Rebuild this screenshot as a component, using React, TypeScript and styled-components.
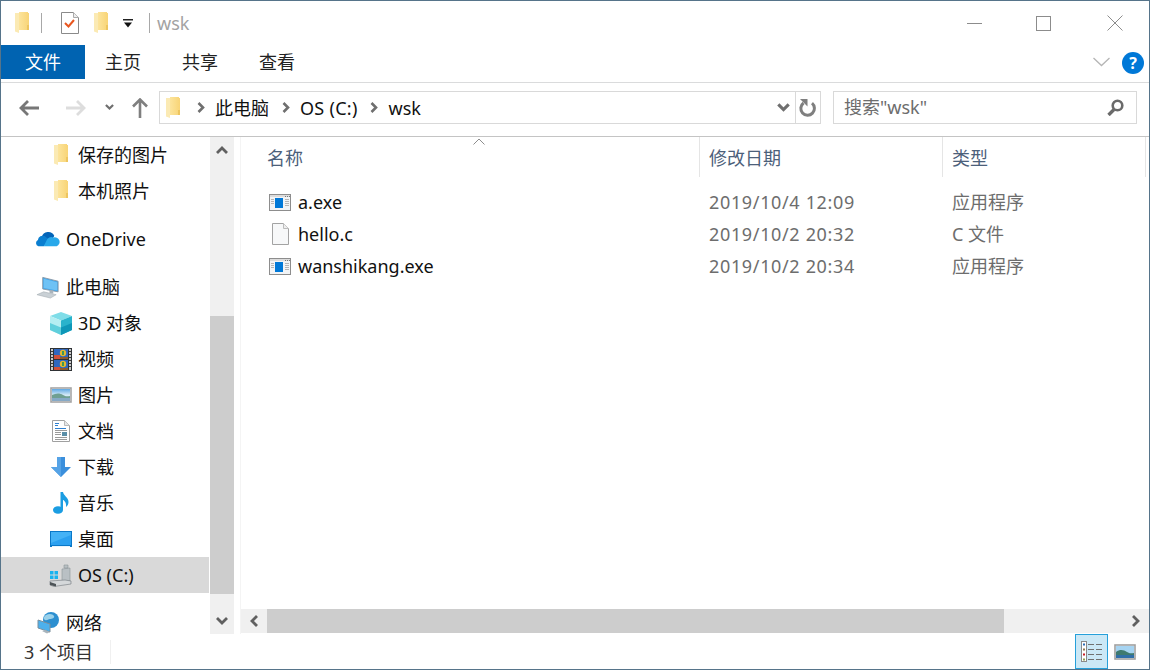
import React from 'react';
import styled, { createGlobalStyle } from 'styled-components';

const GlobalStyle = createGlobalStyle`
  html, body { margin: 0; padding: 0; background: #fff; }
  * { box-sizing: border-box; }
`;

const FONT = `"Noto Sans", "Noto Sans CJK SC", sans-serif`;

const Window = styled.div`
  width: 1150px;
  height: 670px;
  display: flex;
  flex-direction: column;
  border: 1px solid #56748a;
  background: #fff;
  font-family: ${FONT};
  font-size: 18px;
  line-height: 24px;
  color: #111;
  overflow: hidden;
`;

const TitleBar = styled.div`
  height: 44px;
  flex: none;
  display: flex;
  align-items: center;
  padding-left: 14px;
`;

const QuickIcon = styled.div<{ $ml?: number }>`
  display: flex;
  margin-left: ${p => p.$ml ?? 0}px;
`;

const TitleSep = styled.div<{ $ml: number }>`
  width: 1px;
  height: 20px;
  margin-left: ${p => p.$ml}px;
  background: #a8a8a8;
`;

const TitleText = styled.div`
  margin-left: 7px;
  color: #a3a3a3;
`;

const WindowButtons = styled.div`
  margin-left: auto;
  display: flex;
  align-items: center;
  padding-right: 26px;
`;

const WindowButton = styled.div<{ $ml?: number }>`
  display: flex;
  margin-left: ${p => p.$ml ?? 0}px;
`;

const TabBar = styled.div`
  height: 38px;
  flex: none;
  display: flex;
  align-items: flex-start;
  border-bottom: 1px solid #dadbdc;
`;

const FileTab = styled.div`
  width: 84px;
  height: 34px;
  padding-left: 24px;
  background: #0063b1;
  color: #fff;
  display: flex;
  align-items: center;
`;

const Tab = styled.div`
  width: 77px;
  height: 34px;
  padding-left: 20px;
  display: flex;
  align-items: center;
  color: #222;
`;

const RibbonRight = styled.div`
  margin-left: auto;
  height: 34px;
  padding-right: 5px;
  display: flex;
  align-items: center;
  gap: 12px;
`;

const HelpIcon = styled.div`
  width: 22px;
  height: 22px;
  border-radius: 50%;
  background: #0078d7;
  color: #fff;
  font-size: 16px;
  font-weight: 700;
  line-height: 22px;
  text-align: center;
  margin-top: 2px;
`;

const AddressRow = styled.div`
  height: 54px;
  flex: none;
  display: flex;
  align-items: flex-start;
  padding-top: 8px;
  border-bottom: 1px solid #c4c4c4;
`;

const NavButtons = styled.div`
  width: 158px;
  height: 33px;
  flex: none;
  display: flex;
  align-items: center;
  padding-left: 18px;
`;

const NavBtn = styled.div<{ $ml?: number }>`
  display: flex;
  margin-left: ${p => p.$ml ?? 0}px;
`;

const AddressBox = styled.div`
  width: 662px;
  height: 33px;
  flex: none;
  display: flex;
  align-items: center;
  border: 1px solid #d9d9d9;
  padding-left: 6px;
`;

const Crumb = styled.span<{ $wide?: boolean; $ml?: number }>`
  margin: 0 ${p => (p.$wide ? 12 : 13)}px 0 ${p => p.$ml ?? 10}px;
  letter-spacing: ${p => (p.$wide ? 0.28 : 0)}px;
  color: #111;
  white-space: nowrap;
`;

const CrumbChevron = styled.div<{ $ml?: number }>`
  display: flex;
  margin-left: ${p => p.$ml ?? 0}px;
`;

const AddressEnd = styled.div`
  margin-left: auto;
  display: flex;
  align-items: center;
  height: 100%;
`;

const DropCell = styled.div`
  width: 21px;
  display: flex;
  justify-content: center;
  padding-right: 3px;
`;

const RefreshCell = styled.div`
  width: 25px;
  height: 100%;
  display: flex;
  align-items: center;
  justify-content: center;
  border-left: 1px solid #d9d9d9;
`;

const SearchBox = styled.div`
  width: 304px;
  height: 33px;
  flex: none;
  margin-left: 12px;
  display: flex;
  align-items: center;
  justify-content: space-between;
  border: 1px solid #d9d9d9;
  padding: 0 12px 0 10px;
  color: #6d6d6d;
`;

const SearchHint = styled.span`
  padding-bottom: 1px;
`;

const Main = styled.div`
  flex: 1;
  min-height: 0;
  display: flex;
`;

const NavPane = styled.div`
  width: 208px;
  flex: none;
`;

const NavItem = styled.div<{ $top?: boolean; $gap?: boolean; $selected?: boolean }>`
  height: 36px;
  display: flex;
  align-items: center;
  margin-top: ${p => (p.$gap ? 12 : 0)}px;
  padding-left: ${p => (p.$top ? 35 : 48)}px;
  background: ${p => (p.$selected ? '#d9d9d9' : 'transparent')};
  gap: ${p => (p.$top ? 6 : 5)}px;
  white-space: nowrap;
`;

const NavIcon = styled.div`
  width: 24px;
  height: 24px;
  flex: none;
  display: flex;
  align-items: center;
  justify-content: center;
`;

const NavLabel = styled.span`
  padding-bottom: 1px;
`;

const VScroll = styled.div`
  width: 24px;
  margin-left: 1px;
  flex: none;
  display: flex;
  flex-direction: column;
  background: #f0f0f0;
`;

const ArrowCell = styled.div`
  height: 26px;
  flex: none;
  display: flex;
  align-items: center;
  justify-content: center;
`;

const VThumbSpace = styled.div`
  height: 153px;
  flex: none;
`;

const VThumb = styled.div`
  height: 278px;
  flex: none;
  background: #cdcdcd;
`;

const VRest = styled.div`
  flex: 1;
`;

const Splitter = styled.div`
  width: 7px;
  flex: none;
  background: #fff;
  border-right: 1px solid #f4f4f4;
`;

const Content = styled.div`
  flex: 1;
  min-width: 0;
  display: flex;
  flex-direction: column;
`;

const HeaderRow = styled.div`
  height: 40px;
  flex: none;
  display: grid;
  grid-template-columns: 459px 243px 203px;
  position: relative;
`;

const HeaderCell = styled.div<{ $pad: number }>`
  padding-left: ${p => p.$pad}px;
  padding-top: 9px;
  color: #4c607a;
  border-right: 1px solid #e5e5e5;
`;

const SortCaret = styled.div`
  position: absolute;
  left: 232px;
  top: 1px;
  display: flex;
`;

const FileList = styled.div`
  flex: 1;
  padding-top: 9px;
`;

const FileRow = styled.div`
  height: 32px;
  display: grid;
  grid-template-columns: 459px 243px 203px;
  align-items: center;
`;

const NameCell = styled.div`
  display: flex;
  align-items: center;
  padding-left: 26px;
  gap: 5px;
  color: #111;
`;

const FileIconBox = styled.div`
  width: 26px;
  height: 24px;
  display: flex;
  align-items: center;
  justify-content: center;
`;

const MetaCell = styled.div`
  padding-left: 9px;
  color: #6d6d6d;
`;

const DateCell = styled(MetaCell)`
  letter-spacing: 0.65px;
`;

const HScroll = styled.div`
  height: 24px;
  flex: none;
  margin-bottom: 1px;
  display: flex;
  background: #f0f0f0;
`;

const HArrow = styled.div`
  width: 26px;
  flex: none;
  display: flex;
  align-items: center;
  justify-content: center;
`;

const HThumb = styled.div`
  width: 737px;
  flex: none;
  background: #cdcdcd;
`;

const HRest = styled.div`
  flex: 1;
`;

const StatusBar = styled.div`
  height: 35px;
  flex: none;
  display: flex;
  align-items: center;
`;

const StatusText = styled.div`
  width: 110px;
  height: 24px;
  padding-left: 23px;
  margin-top: 1px;
  color: #333;
  border-right: 1px solid #f0f0f0;
`;

const ViewButtons = styled.div`
  margin-left: auto;
  height: 100%;
  display: flex;
  align-items: center;
  padding-right: 13px;
`;

const DetailsView = styled.div`
  width: 33px;
  height: 35px;
  background: #cbe8f6;
  border: 1px solid #26a0da;
  display: flex;
  align-items: center;
  justify-content: center;
`;

const LargeView = styled.div`
  margin-left: 6px;
  display: flex;
`;

const Folder = () => (
  <svg width="15" height="22" viewBox="0 0 15 22">
    <defs>
      <linearGradient id="fold" x1="0" x2="1" y1="0" y2="0">
        <stop offset="0" stopColor="#fce49c" />
        <stop offset="1" stopColor="#f8d476" />
      </linearGradient>
    </defs>
    <path d="M0 1h4v20l-4-1.500z" fill="#fbeab4" />
    <path d="M4 0h9v1h1v17H4z" fill="url(#fold)" />
    <path d="M12 13h2v5h-2z" fill="#edc55f" />
  </svg>
);

const DocCheck = () => (
  <svg width="18" height="22" viewBox="0 0 18 22">
    <path d="M.5.5h12l5 5v16H.5z" fill="#fff" stroke="#8a8a8a" />
    <path d="M12.500.5v5h5" fill="#eee" stroke="#aaa" />
    <path d="M4 11l3.500 3.500L13 8" fill="none" stroke="#e8561f" strokeWidth="2" />
  </svg>
);

const QuickDrop = () => (
  <svg width="10" height="9" viewBox="0 0 10 9">
    <path d="M0 0h10v1.500H0z" fill="#222" />
    <path d="M1 3.500h8L5 8.500z" fill="#111" />
  </svg>
);

const MinIcon = () => (
  <svg width="15" height="15" viewBox="0 0 15 15">
    <path d="M0 7.500h15" stroke="#8c8c8c" />
  </svg>
);

const MaxIcon = () => (
  <svg width="15" height="15" viewBox="0 0 15 15">
    <rect x=".5" y=".5" width="14" height="14" fill="none" stroke="#8c8c8c" />
  </svg>
);

const CloseIcon = () => (
  <svg width="16" height="16" viewBox="0 0 16 16">
    <path d="M.5.5l15 15M15.500.5l-15 15" stroke="#8c8c8c" fill="none" />
  </svg>
);

const RibbonChevron = () => (
  <svg width="17" height="10" viewBox="0 0 17 10">
    <path d="M.5 1l8 7.500 8-7.500" stroke="#b5b5b5" strokeWidth="1.300" fill="none" />
  </svg>
);

const BackArrow = ({ color }: { color: string }) => (
  <svg width="20" height="16" viewBox="0 0 20 16">
    <path d="M9 1L2 8l7 7M2 8h18" stroke={color} strokeWidth="2.800" fill="none" />
  </svg>
);

const ForwardArrow = ({ color }: { color: string }) => (
  <svg width="20" height="16" viewBox="0 0 20 16">
    <path d="M11 1l7 7-7 7M18 8H0" stroke={color} strokeWidth="2.800" fill="none" />
  </svg>
);

const UpArrow = () => (
  <svg width="16" height="20" viewBox="0 0 16 20">
    <path d="M1 8.500L8 1.500l7 7M8 2v18" stroke="#7f7f7f" strokeWidth="2.600" fill="none" />
  </svg>
);

const SmallDown = ({ color = '#6f6f6f', w = 9 }: { color?: string; w?: number }) => (
  <svg width={w} height={w * 0.7} viewBox="0 0 10 7">
    <path d="M1 1l4 4 4-4" stroke={color} strokeWidth="2.400" fill="none" />
  </svg>
);

const CrumbArrow = () => (
  <svg width="8" height="11" viewBox="0 0 8 11">
    <path d="M1.500 1l4.500 4.500-4.500 4.500" stroke="#6f6f6f" strokeWidth="2.600" fill="none" />
  </svg>
);

const Refresh = () => (
  <svg width="18" height="18" viewBox="0 0 18 18">
    <path d="M13 4.200a6.800 6.800 0 1 1-8.500-.2" stroke="#7f7f7f" strokeWidth="3" fill="none" />
    <path d="M0 0h7.500v7.500z" fill="#7f7f7f" transform="translate(1 0)" />
  </svg>
);

const SearchGlass = () => (
  <svg width="17" height="17" viewBox="0 0 17 17">
    <circle cx="10.500" cy="6.500" r="4.800" fill="none" stroke="#6a6a6a" strokeWidth="2.600" />
    <path d="M7 10.500L1.500 16" stroke="#6a6a6a" strokeWidth="3.400" />
  </svg>
);

const ScrollUp = () => (
  <svg width="12" height="8" viewBox="0 0 12 8">
    <path d="M1 7l5-5 5 5" stroke="#606060" strokeWidth="2.800" fill="none" />
  </svg>
);

const ScrollDown = () => (
  <svg width="12" height="8" viewBox="0 0 12 8">
    <path d="M1 1l5 5 5-5" stroke="#606060" strokeWidth="2.800" fill="none" />
  </svg>
);

const ScrollLeft = () => (
  <svg width="8" height="12" viewBox="0 0 8 12">
    <path d="M7 1L2 6l5 5" stroke="#606060" strokeWidth="2.800" fill="none" />
  </svg>
);

const ScrollRight = () => (
  <svg width="8" height="12" viewBox="0 0 8 12">
    <path d="M1 1l5 5-5 5" stroke="#606060" strokeWidth="2.800" fill="none" />
  </svg>
);

const OneDriveIcon = () => (
  <svg width="25" height="16" viewBox="0 0 25 16">
    <path d="M6 6a7 7 0 0 1 13-1.500A5 5 0 0 1 14 8L9 11z" fill="#0364b8" />
    <path d="M2.500 15.500A3.500 3.500 0 0 1 2 9a5 5 0 0 1 7-4l5 4-6 6.500z" fill="#0a7ed0" />
    <path d="M8 15.500l3-6a5 5 0 0 1 7-3 4.500 4.500 0 0 1 3.500 9.000z" fill="#28a8ea" />
  </svg>
);

const PcIcon = () => (
  <svg width="25" height="23" viewBox="0 0 25 23">
    <path d="M7 1l16 4v11L7 13z" fill="#3ea6ee" stroke="#8a9aa8" />
    <path d="M8 2.500l14 3.500v8.500L8 12z" fill="#6ec2f5" />
    <path d="M14 14l4 1v3l-4-1z" fill="#aab4bc" />
    <path d="M1 19l7-3 13 3-6 3.500z" fill="#c9d0d5" stroke="#a5adb3" strokeWidth=".6" />
  </svg>
);

const CubeIcon = () => (
  <svg width="24" height="23" viewBox="0 0 24 23">
    <path d="M12 0l11 4-11 4.500L1 4z" fill="#7fdde8" />
    <path d="M1 4l11 4.500V23L1 18z" fill="#b5eef2" />
    <path d="M1 11l11 4.500V23L1 18z" fill="#60cfdc" />
    <path d="M23 4L12 8.500V23l11-5z" fill="#29b3cc" />
    <path d="M23 11l-11 4.500V23l11-5z" fill="#0e97b8" />
  </svg>
);

const VideoIcon = () => (
  <svg width="22" height="23" viewBox="0 0 22 23">
    <rect width="22" height="23" fill="#2f3235" />
    <path d="M1 1h2v21H1zM19 1h2v21h-2z" fill="#c9c9c9" />
    <path d="M1 3.500h2M1 6.500h2M1 9.500h2M1 12.500h2M1 15.500h2M1 18.500h2M19 3.500h2M19 6.500h2M19 9.500h2M19 12.500h2M19 15.500h2M19 18.500h2" stroke="#3b3b3b" />
    <rect x="4" y="1" width="14" height="10" fill="#2f67c0" />
    <rect x="4" y="12" width="14" height="10" fill="#2f67c0" />
    <rect x="4" y="7" width="6" height="4" fill="#d0503a" />
    <rect x="4" y="19" width="6" height="3" fill="#d0503a" />
    <circle cx="13" cy="5" r="3.200" fill="#e5b72e" />
    <path d="M12 3h2v4h-2z" fill="#3f9a55" />
    <circle cx="13" cy="16" r="3.200" fill="#e5b72e" />
    <path d="M12 14h2v4h-2z" fill="#3f9a55" />
    <path d="M10 9h8v2h-8zM10 20h8v2h-8z" fill="#8f5a2c" />
  </svg>
);

const PictureIcon = () => (
  <svg width="22" height="16" viewBox="0 0 22 16">
    <defs>
      <linearGradient id="sky" x1="0" x2="0" y1="0" y2="1">
        <stop offset="0" stopColor="#5fa8e4" />
        <stop offset=".5" stopColor="#d4e9f6" />
      </linearGradient>
    </defs>
    <rect x="1" y="1" width="20" height="14" fill="#fff" stroke="#a5a5a5" strokeWidth="1.600" />
    <rect x="2" y="2" width="18" height="12" fill="url(#sky)" />
    <path d="M2 8c4-2 8-2 11 0s5 1 7 1v5H2z" fill="#6f9f92" />
    <path d="M2 11h18v3H2z" fill="#86a9c6" />
  </svg>
);

const DocsIcon = () => (
  <svg width="18" height="22" viewBox="0 0 18 22">
    <path d="M.5.5h12l5 5v16H.5z" fill="#fff" stroke="#a0a0a0" />
    <path d="M12.500.5v5h5" fill="#e6e6e6" stroke="#bbb" />
    <path d="M3 3.500h4M3 5.500h3M3 8.500h11" stroke="#2f80d0" />
    <path d="M3 10.500h12M3 17.500h12M3 19.500h12M3 12.500h6M3 14.500h6" stroke="#9a9a9a" />
    <rect x="10" y="12" width="5" height="4" fill="#5b8fa8" />
  </svg>
);

const DownloadIcon = () => (
  <svg width="20" height="20" viewBox="0 0 20 20">
    <path d="M6 0h8v10h6L10 20 0 10h6z" fill="#3b8fdc" />
    <path d="M6 0h4v20L0 10h6z" fill="#56a3e6" />
  </svg>
);

const MusicIcon = () => (
  <svg width="16" height="22" viewBox="0 0 16 22">
    <ellipse cx="5" cy="18" rx="5" ry="3.800" fill="#1b9de2" />
    <path d="M7.500 0h2.500c.5 4 5.500 5 5.500 10 0 2-1 4-2.500 5 .6-3-1-6.500-3-7v10H7.500z" fill="#1b9de2" />
  </svg>
);

const DesktopIcon = () => (
  <svg width="22" height="16" viewBox="0 0 22 16">
    <rect width="22" height="16" fill="#0a78c8" />
    <rect x="1" y="1" width="20" height="13" fill="#2ba0f0" />
    <path d="M1 1h20v3L1 12z" fill="#44b2f6" />
    <path d="M2 15.500h18" stroke="#e8f4fc" />
  </svg>
);

const DriveIcon = () => (
  <svg width="24" height="23" viewBox="0 0 24 23">
    <path d="M1 7h3.500v3.500H1zM5.500 7H9v3.500H5.500zM1 11.500h3.500V15H1zM5.500 11.500H9V15H5.500z" fill="#19b3ef" />
    <path d="M15 1h4v3h-4zM13 5l8-1v13l-8 1z" fill="#b9c0c4" stroke="#8c9398" strokeWidth=".6" />
    <path d="M1 17l15-1 6 1v3L5 22.500 1 21z" fill="#d5d8da" stroke="#70777c" strokeWidth=".6" />
    <path d="M1 18l6 2v2.500L1 21z" fill="#4d5357" />
  </svg>
);

const NetworkIcon = () => (
  <svg width="23" height="22" viewBox="0 0 23 22">
    <circle cx="14" cy="8" r="8" fill="#2c8fd0" />
    <path d="M9 3c3-2 7-1 8 1s-2 3-4 3-3 2-5 1-1-4 1-5z" fill="#9ad1ea" />
    <path d="M1 8l12 4v8L1 16z" fill="#4db0ec" stroke="#7c8f9c" />
    <path d="M5 19l5 2.500 3-1.500-5-2z" fill="#a8b4bc" />
  </svg>
);

const ExeIcon = () => (
  <svg width="22" height="17" viewBox="0 0 22 17">
    <rect x=".5" y=".5" width="21" height="16" fill="#f2f4f6" stroke="#8d8d8d" />
    <path d="M1 1h20v2H1z" fill="#dcdcdc" />
    <path d="M16 2.500h1M18 2.500h1M20 2.500h1" stroke="#777" />
    <rect x="6" y="4" width="8" height="10" fill="#0078d7" />
    <path d="M2 5.500h3M2 7.500h3M2 9.500h3M16 5.500h4M16 7.500h4M16 9.500h4M16 11.500h4" stroke="#b5b5b5" />
  </svg>
);

const FileIcon = () => (
  <svg width="17" height="22" viewBox="0 0 17 22">
    <path d="M.5.500h11l5 5v16H.500z" fill="#f7f8f9" stroke="#a3a3a3" />
    <path d="M11.500.500v5h5" fill="#eee" stroke="#bcbcbc" />
  </svg>
);

const SortUp = () => (
  <svg width="12" height="7" viewBox="0 0 12 7">
    <path d="M.5 6.500L6 1l5.500 5.500" stroke="#8d8d8d" fill="none" />
  </svg>
);

const DetailsGlyph = () => (
  <svg width="21" height="21" viewBox="0 0 21 21">
    <rect x=".5" y=".5" width="5" height="20" fill="#fff" stroke="#8a8a8a" />
    <rect x="2" y="2.500" width="2" height="2" fill="#2a6fb8" />
    <rect x="2" y="7.500" width="2" height="2" fill="#8f7a50" />
    <rect x="2" y="12.500" width="2" height="2" fill="#c8202a" />
    <rect x="2" y="17.500" width="2" height="2" fill="#8fa050" />
    <path d="M7 3.500h6M15 3.500h6M7 8.500h6M15 8.500h6M7 13.500h6M15 13.500h6M7 18.500h6M15 18.500h6" stroke="#707070" />
  </svg>
);

const LargeGlyph = () => (
  <svg width="22" height="16" viewBox="0 0 22 16">
    <rect x="1" y="1" width="20" height="14" fill="#fff" stroke="#a0a0a0" strokeWidth="1.600" />
    <rect x="2" y="2" width="18" height="12" fill="#a6d4f2" />
    <path d="M2 8c4-3 8-2 11 0s5 1 7 1v5H2z" fill="#3e7a70" />
    <path d="M2 11h18v3H2z" fill="#2f6fa8" />
  </svg>
);

type NavEntry = {
  label: string;
  icon: React.ReactNode;
  top?: boolean;
  gap?: boolean;
  selected?: boolean;
};

const navItems: NavEntry[] = [
  { label: '保存的图片', icon: <Folder /> },
  { label: '本机照片', icon: <Folder /> },
  { label: 'OneDrive', icon: <OneDriveIcon />, top: true, gap: true },
  { label: '此电脑', icon: <PcIcon />, top: true, gap: true },
  { label: '3D 对象', icon: <CubeIcon /> },
  { label: '视频', icon: <VideoIcon /> },
  { label: '图片', icon: <PictureIcon /> },
  { label: '文档', icon: <DocsIcon /> },
  { label: '下载', icon: <DownloadIcon /> },
  { label: '音乐', icon: <MusicIcon /> },
  { label: '桌面', icon: <DesktopIcon /> },
  { label: 'OS (C:)', icon: <DriveIcon />, selected: true },
  { label: '网络', icon: <NetworkIcon />, top: true, gap: true },
];

const files = [
  { name: 'a.exe', date: '2019/10/4 12:09', type: '应用程序', icon: <ExeIcon /> },
  { name: 'hello.c', date: '2019/10/2 20:32', type: 'C 文件', icon: <FileIcon /> },
  { name: 'wanshikang.exe', date: '2019/10/2 20:34', type: '应用程序', icon: <ExeIcon /> },
];

export default function App(): JSX.Element {
  return (
    <Window>
      <GlobalStyle />
      <TitleBar>
        <QuickIcon><Folder /></QuickIcon>
        <TitleSep $ml={11} />
        <QuickIcon $ml={19}><DocCheck /></QuickIcon>
        <QuickIcon $ml={15}><Folder /></QuickIcon>
        <QuickIcon $ml={14}><QuickDrop /></QuickIcon>
        <TitleSep $ml={16} />
        <TitleText>wsk</TitleText>
        <WindowButtons>
          <WindowButton><MinIcon /></WindowButton>
          <WindowButton $ml={54}><MaxIcon /></WindowButton>
          <WindowButton $ml={56}><CloseIcon /></WindowButton>
        </WindowButtons>
      </TitleBar>
      <TabBar>
        <FileTab>文件</FileTab>
        <Tab>主页</Tab>
        <Tab>共享</Tab>
        <Tab>查看</Tab>
        <RibbonRight>
          <RibbonChevron />
          <HelpIcon>?</HelpIcon>
        </RibbonRight>
      </TabBar>
      <AddressRow>
        <NavButtons>
          <NavBtn><BackArrow color="#777" /></NavBtn>
          <NavBtn $ml={27}><ForwardArrow color="#ddd" /></NavBtn>
          <NavBtn $ml={19}><SmallDown /></NavBtn>
          <NavBtn $ml={18}><UpArrow /></NavBtn>
        </NavButtons>
        <AddressBox>
          <Folder />
          <CrumbChevron $ml={16}><CrumbArrow /></CrumbChevron>
          <Crumb>此电脑</Crumb>
          <CrumbArrow />
          <Crumb $wide>OS (C:)</Crumb>
          <CrumbArrow />
          <Crumb $ml={11}>wsk</Crumb>
          <AddressEnd>
            <DropCell><SmallDown w={13} /></DropCell>
            <RefreshCell><Refresh /></RefreshCell>
          </AddressEnd>
        </AddressBox>
        <SearchBox>
          <SearchHint>搜索"wsk"</SearchHint>
          <SearchGlass />
        </SearchBox>
      </AddressRow>
      <Main>
        <NavPane>
          {navItems.map(item => (
            <NavItem key={item.label} $top={item.top} $gap={item.gap} $selected={item.selected}>
              <NavIcon>{item.icon}</NavIcon>
              <NavLabel>{item.label}</NavLabel>
            </NavItem>
          ))}
        </NavPane>
        <VScroll>
          <ArrowCell><ScrollUp /></ArrowCell>
          <VThumbSpace />
          <VThumb />
          <VRest />
          <ArrowCell><ScrollDown /></ArrowCell>
        </VScroll>
        <Splitter />
        <Content>
          <HeaderRow>
            <SortCaret><SortUp /></SortCaret>
            <HeaderCell $pad={26}>名称</HeaderCell>
            <HeaderCell $pad={9}>修改日期</HeaderCell>
            <HeaderCell $pad={9}>类型</HeaderCell>
          </HeaderRow>
          <FileList>
            {files.map(file => (
              <FileRow key={file.name}>
                <NameCell>
                  <FileIconBox>{file.icon}</FileIconBox>
                  {file.name}
                </NameCell>
                <DateCell>{file.date}</DateCell>
                <MetaCell>{file.type}</MetaCell>
              </FileRow>
            ))}
          </FileList>
          <HScroll>
            <HArrow><ScrollLeft /></HArrow>
            <HThumb />
            <HRest />
            <HArrow><ScrollRight /></HArrow>
          </HScroll>
        </Content>
      </Main>
      <StatusBar>
        <StatusText>3 个项目</StatusText>
        <ViewButtons>
          <DetailsView><DetailsGlyph /></DetailsView>
          <LargeView><LargeGlyph /></LargeView>
        </ViewButtons>
      </StatusBar>
    </Window>
  );
}
